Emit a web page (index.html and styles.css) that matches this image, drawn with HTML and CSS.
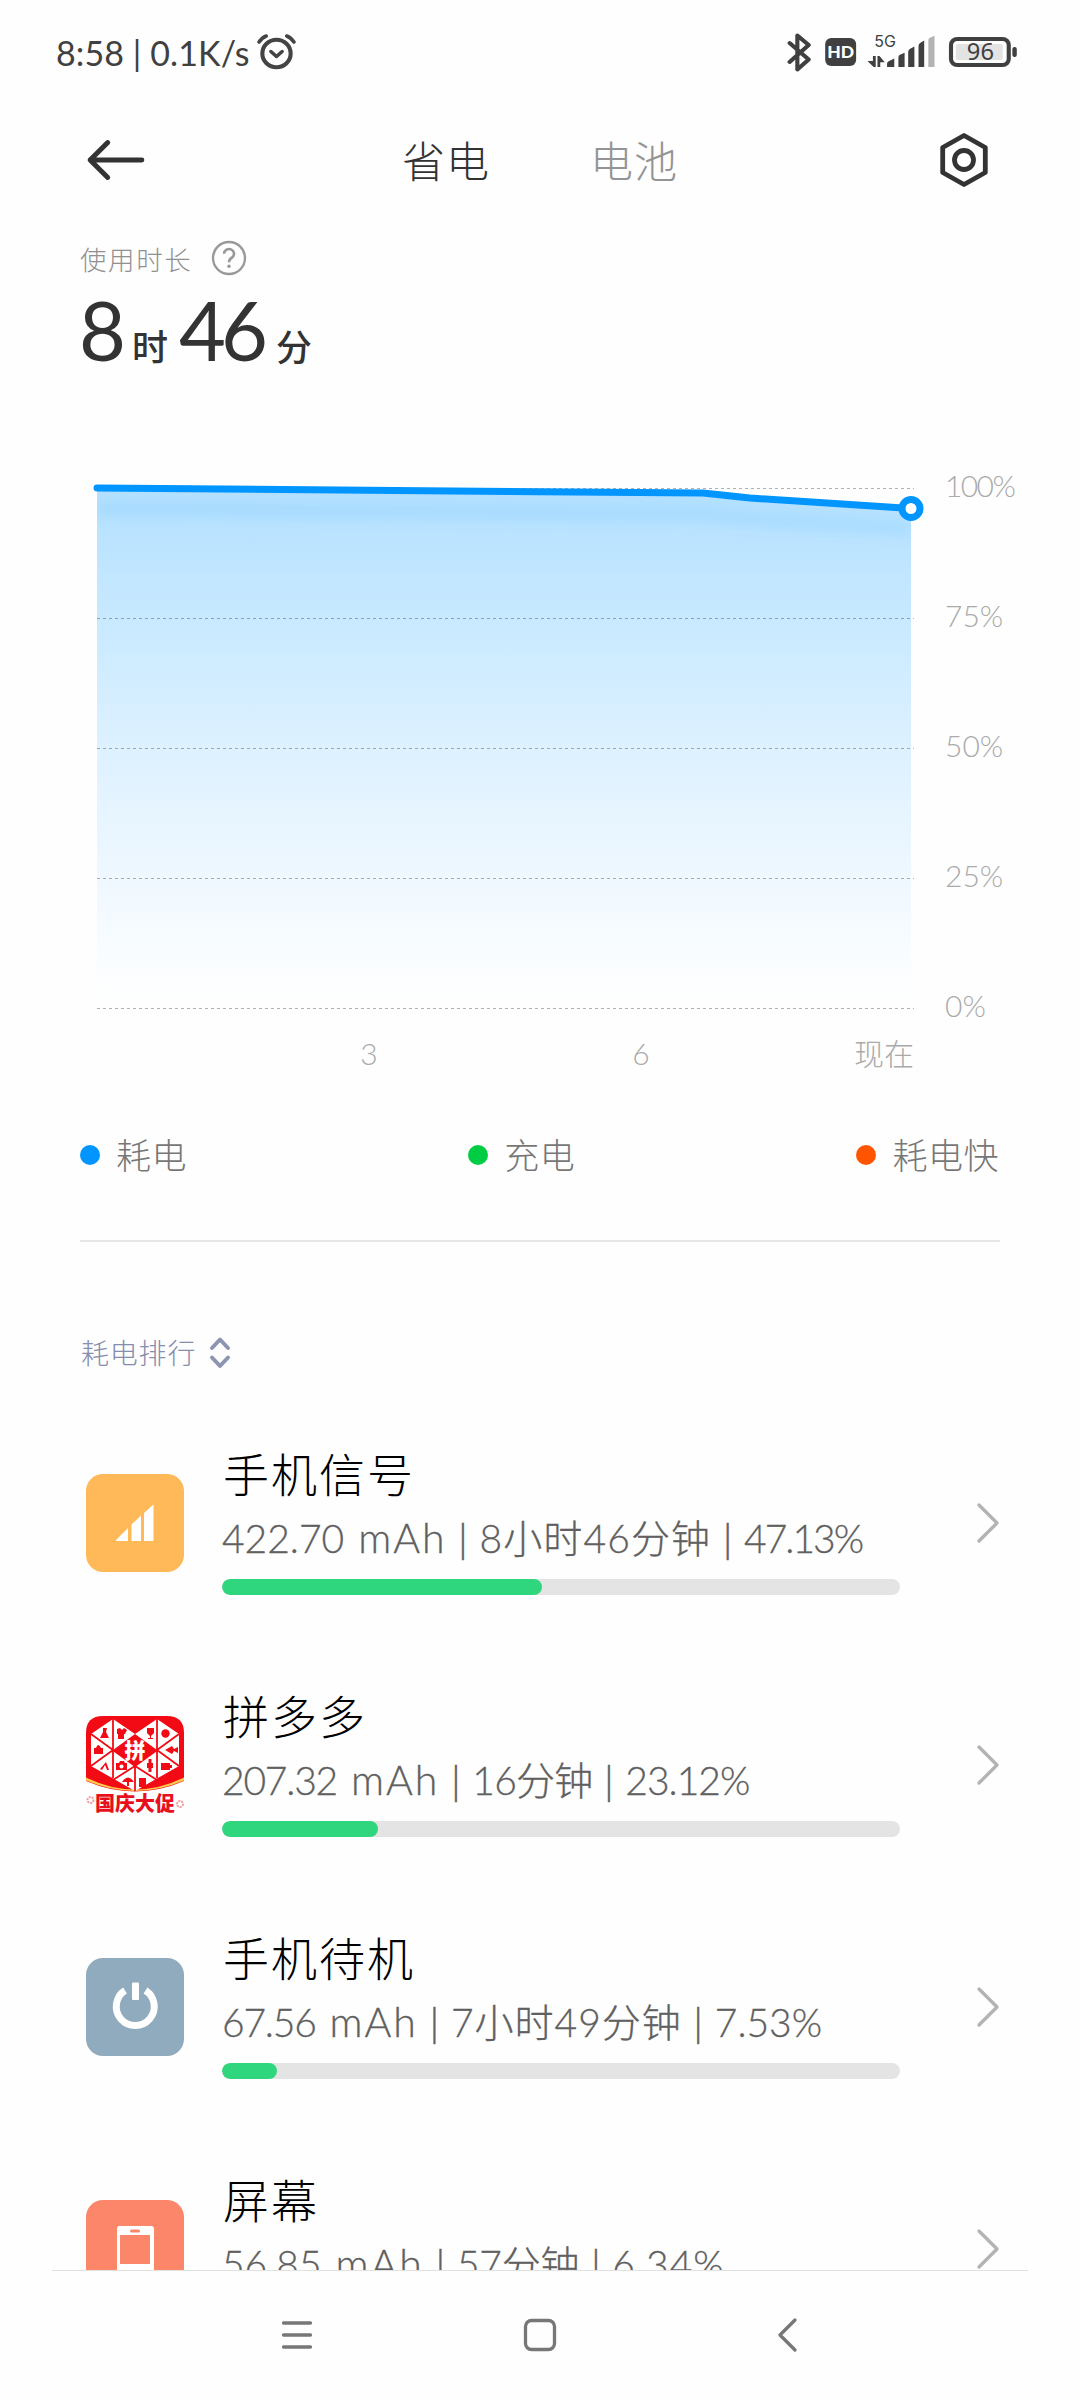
FILE: index.html
```html
<!DOCTYPE html>
<html lang="zh-CN">
<head>
<meta charset="utf-8">
<title>省电</title>
<link rel="stylesheet" href="styles.css">
</head>
<body>
<div class="screen">
  <header class="status">
    <span class="status-time">8:58 | 0.1K/s</span>
    <svg class="alarm" width="39" height="36" viewBox="0 0 38 36" preserveAspectRatio="none" fill="none" stroke="#444"><circle cx="19" cy="19.500" r="13.800" stroke-width="4"/><path d="M13.500 17.500l5.500 5 5.500-5" stroke-width="3.400" stroke-linecap="round" stroke-linejoin="round"/><path d="M2 8q3-4.500 7-6M36 8q-3-4.500-7-6" stroke-width="3.500" stroke-linecap="round"/></svg>
    <svg class="status-icons" width="231" height="40" viewBox="0 0 224 40" preserveAspectRatio="none">
      <path d="M3.500 11l18.500 16.500-11 10V3.500l11 9.500L3.500 30" fill="none" stroke="#404040" stroke-width="4" stroke-linecap="round" stroke-linejoin="round"/>
      <rect x="38" y="6" width="30" height="28" rx="6" fill="#404040"/>
      <text class="hd" x="53" y="25.800" text-anchor="middle">HD</text>
      <text class="net" x="85.500" y="14.500">5G</text>
      <path d="M84.300 24h2.700v11h-2l-6-6h5.300zM88.700 35V24h2l5 6.300h-4.300V35z" fill="#404040"/>
      <path d="M98 35v-3.500q0-1.500 1.500-2.300l5.500-2.700V35zM109 35V25.500q0-2 1.500-2.700l4.500-2V35zM118.500 35V20q0-2 1.500-3l4.500-2.500V35zM128.500 35V14q0-2 1.500-3l4-2.500V35z" fill="#404040"/>
      <path d="M138 35V8.500q0-2 1.500-2.700l4.500-2V35z" fill="#b3b3b3"/>
      <rect x="160" y="7" width="56" height="26" rx="6" fill="none" stroke="#404040" stroke-width="4"/>
      <rect x="164.700" y="12" width="45.500" height="16" rx="2" fill="#e3e3e3"/>
      <rect x="219.500" y="15" width="4.300" height="10" rx="2" fill="#404040"/>
      <text class="level" x="188.500" y="28" text-anchor="middle">96</text>
    </svg>
  </header>

  <nav class="tabs">
    <svg class="back" width="60" height="42" viewBox="0 0 58 42" preserveAspectRatio="none" fill="none" stroke="#333" stroke-width="4.800" stroke-linecap="round" stroke-linejoin="round"><path d="M54 21H4M21 3.500L4 21l17 17.500"/></svg>
    <span class="tab active">省电</span>
    <span class="tab">电池</span>
    <svg class="gear" width="50" height="56" viewBox="0 0 50 56" fill="none" stroke="#333" stroke-width="4.800"><path d="M25 3.500L46.300 15.500V40.500L25 52.500L3.700 40.500V15.500z" stroke-linejoin="round"/><circle cx="25" cy="28" r="9.500"/></svg>
  </nav>

  <section class="usage">
    <div class="usage-label"><span>使用时长</span>
      <svg width="36" height="36" viewBox="0 0 36 36" fill="none" stroke="#999" stroke-width="2.300"><circle cx="18" cy="18" r="16"/><path d="M13 13.800a5 4.800 0 1 1 8.500 3.400q-3.500 2.200-3.500 5" stroke-width="2.600"/><circle cx="18" cy="26.300" r="1.700" fill="#999" stroke="none"/></svg>
    </div>
    <div class="usage-value"><b class="n1">8</b><i class="u1">时</i><b class="n2">46</b><i class="u2">分</i></div>
  </section>

  <section class="chart">
    <svg class="plot" width="860" height="560" viewBox="80 470 860 560">
      <defs>
        <linearGradient id="area" x1="0" y1="488" x2="0" y2="1008" gradientUnits="userSpaceOnUse"><stop offset="0" stop-color="#b3e0ff"/><stop offset=".25" stop-color="#c8e9ff"/><stop offset=".5" stop-color="#ddf1ff"/><stop offset=".75" stop-color="#eff8ff"/><stop offset=".94" stop-color="#fcfeff"/><stop offset="1" stop-color="#fefefe"/></linearGradient>
        <clipPath id="below"><path d="M97 488L703 493L750 498L911 508.500V1008H97z"/></clipPath>
        <filter id="soft" x="-10%" y="-200%" width="120%" height="500%"><feGaussianBlur stdDeviation="6"/></filter>
      </defs>
      <path d="M97 488L703 493L750 498L911 508.500V1008H97z" fill="url(#area)"/>
      <g clip-path="url(#below)"><path d="M97 509L703 514L750 519L911 529" stroke="#0095ff" stroke-opacity=".08" stroke-width="16" fill="none" filter="url(#soft)"/></g>
      <path d="M97 488.500H914M97 618.500H914M97 748.500H914M97 878.500H914M97 1008.500H914" stroke="#000" stroke-opacity=".3" stroke-dasharray="3 3"/>
      <path d="M97 488L703 493L750 498L911 508.500" fill="none" stroke="#0095ff" stroke-width="7" stroke-linecap="round" stroke-linejoin="round"/>
      <circle cx="911" cy="508.500" r="9" fill="#fff" stroke="#0095ff" stroke-width="7"/>
    </svg>
    <div class="y-axis"><span class="full">100%</span><span>75%</span><span>50%</span><span>25%</span><span>0%</span></div>
    <div class="x-axis"><span>3</span><span>6</span><span class="now">现在</span></div>
  </section>

  <section class="legend">
    <span class="key use">耗电</span><span class="key charge">充电</span><span class="key fast">耗电快</span>
  </section>

  <div class="rank-title"><span>耗电排行</span>
    <svg width="22" height="34" viewBox="0 0 22 34" fill="none" stroke="#8e95b3" stroke-width="4" stroke-linecap="round" stroke-linejoin="round"><path d="M3 12l8-8.500 8 8.500M3 21.500l8 8.500 8-8.500"/></svg>
  </div>

  <main class="list">
    <article class="row signal">
      <svg class="app" width="98" height="98" viewBox="0 0 98 98"><rect width="98" height="98" rx="17" fill="#ffb959"/><path d="M30 67v-1L42 54v13zM45.500 67V50.500L55 41.500V67zM58 67V39l9.500-8.500V67z" fill="#fff"/></svg>
      <div class="info"><h2>手机信号</h2><p><span class="num">422.70</span><span class="unit">mAh</span><span class="sep">|</span><span class="time">8小时46分钟</span><span class="sep">|</span><span class="pct">47.13%</span></p><div class="bar"><div class="fill" style="width:47.13%"></div></div></div>
      <svg class="chev" width="24" height="42" viewBox="0 0 24 42"><path d="M3 3l18 18L3 39"/></svg>
    </article>
    <article class="row shop">
      <svg class="app" width="98" height="98" viewBox="0 0 98 98">
        <defs><clipPath id="appclip"><path d="M17 0H81Q98 0 98 17V98H0V17Q0 0 17 0z"/></clipPath></defs>
        <g clip-path="url(#appclip)">
          <rect width="98" height="98" fill="#f20a14"/>
          <path d="M0 65q49 21 98 0v33H0z" fill="#fefefe"/><path d="M0 61.500q49 24 98 0v3q-49 21-98 0z" fill="#ffc94d"/>
          <path d="M27 3L49 18 71 3 93 18V50L49 75 5 50V18z" fill="#fff"/>
          <path d="M49 18L27 34 49 50 71 34z" fill="#f20a14"/>
          <path d="M27 3v59M71 3v59M49 50v25M5 18l22 16L5 50M93 18L71 34l22 16M5 50l22-16 22 16-22 14M49 50l22-16 22 16M49 50l22 14" fill="none" stroke="#f20a14" stroke-width="1.800"/>
          <path d="M17 12h4l-1 4 3 6h-9l3-6zM31 13l3-1 2 2 2-2 3 2-2 4h-1v5h-6v-5h-1zM61 12h7v5l-3 3v2h2v1h-5v-1h2v-2l-3-3zM8 32h2q2-6 5 0h2v6H8zM79 34l7-4 2 3 4-2v6l-4-2-2 3zM14 53l6-7 3 8h-2l-2-5-3 5zM30 47h3l1-2h4l1 2h2v7H30zM61 47h6v5h-6zM75 47h9v2h2v3h-2v2h-9zM36 66q6-9 12 0h-5v4h-2v-4zM53 62h7v9h-7z" fill="#f20a14"/>
          <circle cx="79.500" cy="17.500" r="4.200" fill="#f20a14"/><circle cx="35.500" cy="50.500" r="2" fill="#fff"/><path d="M64 43v13" stroke="#f20a14" stroke-width="3"/>
          <circle cx="4.500" cy="84" r="3" fill="none" stroke="#f49b9b" stroke-width="2" stroke-dasharray="2 1"/><circle cx="94" cy="88" r="3" fill="none" stroke="#f49b9b" stroke-width="2" stroke-dasharray="2 1"/>
        </g>
        <text class="pin" x="49" y="42" text-anchor="middle">拼</text>
        <text class="sale" x="49" y="95" text-anchor="middle">国庆大促</text>
      </svg>
      <div class="info"><h2>拼多多</h2><p><span class="num">207.32</span><span class="unit">mAh</span><span class="sep">|</span><span class="time">16分钟</span><span class="sep">|</span><span class="pct">23.12%</span></p><div class="bar"><div class="fill" style="width:23%"></div></div></div>
      <svg class="chev" width="24" height="42" viewBox="0 0 24 42"><path d="M3 3l18 18L3 39"/></svg>
    </article>
    <article class="row standby">
      <svg class="app" width="98" height="98" viewBox="0 0 98 98"><rect width="98" height="98" rx="17" fill="#90abbd"/><path d="M39 32.500a19 19 0 1 0 20.500 0" fill="none" stroke="#fff" stroke-width="7"/><rect x="46" y="24.500" width="7" height="17.500" rx="1" fill="#fff"/></svg>
      <div class="info"><h2>手机待机</h2><p><span class="num">67.56</span><span class="unit">mAh</span><span class="sep">|</span><span class="time">7小时49分钟</span><span class="sep">|</span><span class="pct">7.53%</span></p><div class="bar"><div class="fill" style="width:8.1%"></div></div></div>
      <svg class="chev" width="24" height="42" viewBox="0 0 24 42"><path d="M3 3l18 18L3 39"/></svg>
    </article>
    <article class="row display">
      <svg class="app" width="98" height="98" viewBox="0 0 98 98"><rect width="98" height="98" rx="17" fill="#fb8669"/><path d="M33 26h32q3 0 3 3v44H31V29q0-3 2-3z" fill="#fff"/><rect x="34" y="35" width="30" height="29" fill="#fb8669"/><rect x="44" y="29.500" width="10" height="3" rx="1.500" fill="#fb8669"/></svg>
      <div class="info"><h2>屏幕</h2><p><span class="num">56.85</span><span class="unit">mAh</span><span class="sep">|</span><span class="time">57分钟</span><span class="sep">|</span><span class="pct">6.34%</span></p><div class="bar"><div class="fill" style="width:6.34%"></div></div></div>
      <svg class="chev" width="24" height="42" viewBox="0 0 24 42"><path d="M3 3l18 18L3 39"/></svg>
    </article>
  </main>

  <footer class="navbar">
    <svg class="menu" width="32" height="30" viewBox="0 0 32 30"><path d="M2.500 3h27M2.500 15h27M2.500 27h27"/></svg>
    <svg class="home" width="34" height="34" viewBox="0 0 34 34"><rect x="2.500" y="2.500" width="29" height="29" rx="6"/></svg>
    <svg class="prev" width="22" height="36" viewBox="0 0 22 36"><path d="M19 3L4 18l15 15"/></svg>
  </footer>
</div>
</body>
</html>
```
FILE: styles.css
```css
* { box-sizing: border-box; margin: 0; padding: 0; }
body { background: #fefefe; }
svg { display: block; flex: none; }
.screen { width: 1080px; height: 2400px; overflow: hidden; display: flex; flex-direction: column; font-family: Lato, "Noto Sans CJK SC", sans-serif; font-weight: 300; color: #333; }

.status { height: 104px; flex: none; display: flex; align-items: center; padding: 0 63px 0 56px; }
.status-time { font-size: 34px; font-weight: 400; color: #404040; width: 201px; line-height: 40px; white-space: nowrap; letter-spacing: 0.1px; padding-top: 1px; }
.status-icons { margin-left: auto; }
.hd { font: 900 17px Lato, sans-serif; fill: #fff; }
.net { font: 400 15.500px Inter, sans-serif; fill: #404040; }
.level { font: 400 23px "Noto Sans", sans-serif; fill: #404040; }

.tabs { height: 112px; flex: none; display: flex; align-items: center; padding: 0 91px 0 86px; }
.tab { font-size: 43px; line-height: 60px; letter-spacing: 1px; color: #949494; margin-left: 100px; padding-top: 3px; }
.tab.active { color: #333; margin-left: 256px; }
.gear { margin-left: auto; }

.usage { height: 254px; flex: none; padding: 24px 0 0 80px; }
.usage-label { display: flex; align-items: center; gap: 19px; height: 36px; font-size: 26.500px; letter-spacing: 1.600px; color: #909090; }
.usage-value { display: flex; align-items: baseline; height: 100px; line-height: 108px; font-weight: 400; }
.usage-value b { font-size: 81px; font-weight: 400; }
.usage-value i { font-size: 36px; font-style: normal; font-weight: 500; }
.usage-value .n1 { margin-left: -1px; }
.usage-value .u1 { margin-left: 6px; }
.usage-value .n2 { margin-left: 11px; letter-spacing: -5px; }
.usage-value .u2 { margin-left: 13px; }

.chart { height: 610px; flex: none; display: grid; grid-template-columns: 865px 1fr; grid-template-rows: 560px 50px; padding-left: 80px; color: #aaa; font-size: 30px; }
.y-axis { display: flex; flex-direction: column; }
.y-axis span { height: 130px; flex: none; line-height: 31px; }
.y-axis .full { letter-spacing: -1.600px; }
.x-axis { display: grid; grid-template-columns: 153px 272px 272px 137px; line-height: 46px; width: 834px; }
.x-axis span { text-align: center; }
.x-axis span:first-child { grid-column: 2; }
.x-axis .now { text-align: right; }

.legend { height: 162px; flex: none; margin: 0 80px; padding: 50px 1px 0 0; border-bottom: 2px solid #e6e6e6; display: flex; justify-content: space-between; color: #777; font-size: 35px; line-height: 52px; }
.key { display: flex; align-items: center; gap: 16px; height: 50px; letter-spacing: 0.500px; }
.key::before { content: ""; width: 20px; height: 20px; border-radius: 50%; background: #0095ff; }
.charge::before { background: #00cc44; }
.fast::before { background: #ff5500; }

.rank-title { height: 160px; flex: none; padding: 94px 0 0 81px; display: flex; gap: 13px; color: #868dad; font-size: 28px; line-height: 34px; letter-spacing: 0.800px; }

.list { height: 868px; flex: none; overflow: hidden; }
.row { height: 242px; display: flex; align-items: center; padding: 0 80px 0 86px; }
.info { width: 678px; margin-left: 38px; }
h2 { font-size: 46px; font-weight: 300; line-height: 48px; letter-spacing: 2px; color: #000; padding-left: 1px; }
p { display: flex; align-items: baseline; height: 52px; font-size: 39px; line-height: 52px; margin-top: 12.500px; color: #606060; white-space: nowrap; -webkit-text-stroke: 0.3px #606060; }
.unit { margin-left: 14px; font-size: 41px; letter-spacing: 2px; }
.sep { width: 33px; text-align: center; -webkit-text-stroke-width: 0.6px; }
.signal .time { letter-spacing: 1.100px; }
.signal .pct { letter-spacing: -2px; }
.shop .num { letter-spacing: -1.200px; }
.shop .time { letter-spacing: -0.800px; }
.shop .pct { letter-spacing: -1px; }
.standby .num { letter-spacing: -1.200px; }
.standby .time { letter-spacing: 1px; }
.display .time { letter-spacing: -0.200px; }
.display .pct { letter-spacing: 1px; }
.bar { height: 16px; border-radius: 8px; background: #e4e4e4; margin-top: 15.500px; overflow: hidden; }
.fill { height: 16px; border-radius: 8px; background: #2fd67d; }
.chev { margin-left: auto; fill: none; stroke: #b3b3b3; stroke-width: 3.300; stroke-linecap: round; stroke-linejoin: round; }
.pin { font: 900 21px "Noto Sans CJK SC", sans-serif; fill: #fff; }
.sale { font: 900 20px "Noto Sans CJK SC", sans-serif; fill: #e8101c; }

.navbar { height: 130px; flex: none; margin: 0 52px; border-top: 1px solid #e2e2e2; display: flex; align-items: center; padding: 0 0 2px 229px; fill: none; stroke: #777; stroke-width: 3.300; stroke-linecap: round; stroke-linejoin: round; }
.home { margin-left: 210px; }
.prev { margin-left: 219px; }
```
